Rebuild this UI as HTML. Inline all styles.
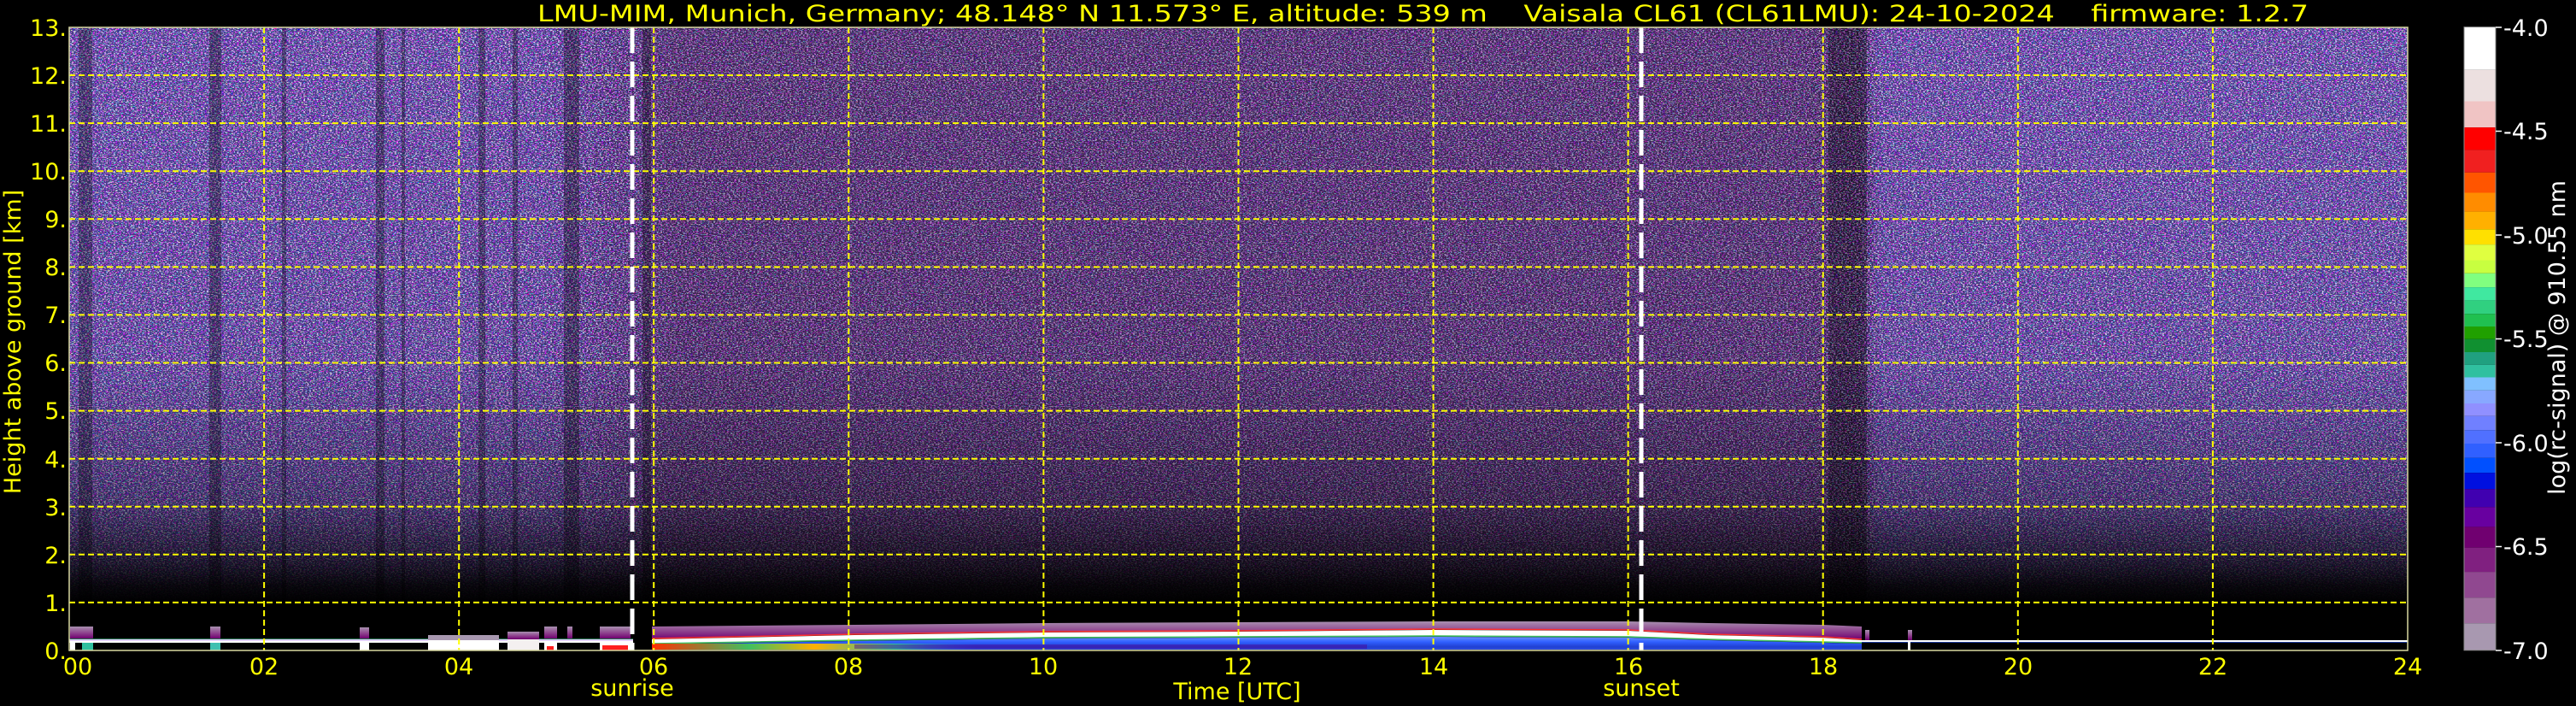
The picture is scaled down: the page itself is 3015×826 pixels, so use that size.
<!DOCTYPE html>
<html><head><meta charset="utf-8"><style>
html,body{margin:0;padding:0;background:#000;}
svg{display:block}
text{font-family:"DejaVu Sans","Liberation Sans",sans-serif;}
</style></head><body>
<svg width="3015" height="826" viewBox="0 0 3015 826" xmlns="http://www.w3.org/2000/svg">
<defs>
<linearGradient id="hcol" x1="0" x2="1" y1="0" y2="0">
<stop offset="0" stop-color="rgb(72,64,135)"/>
<stop offset="0.2" stop-color="rgb(70,60,130)"/>
<stop offset="0.235" stop-color="rgb(62,44,100)"/>
<stop offset="0.26" stop-color="rgb(62,38,86)"/>
<stop offset="0.74" stop-color="rgb(62,38,86)"/>
<stop offset="0.765" stop-color="rgb(45,28,65)"/>
<stop offset="0.775" stop-color="rgb(70,60,130)"/>
<stop offset="1" stop-color="rgb(72,64,135)"/>
</linearGradient>
<linearGradient id="hn" x1="0" x2="1" y1="0" y2="0">
<stop offset="0" stop-color="#fff"/>
<stop offset="0.22" stop-color="#fff"/>
<stop offset="0.26" stop-color="#b8b8b8"/>
<stop offset="0.74" stop-color="#b8b8b8"/>
<stop offset="0.775" stop-color="#fff"/>
<stop offset="1" stop-color="#fff"/>
</linearGradient>
<linearGradient id="vdark" x1="0" x2="0" y1="32" y2="705" gradientUnits="userSpaceOnUse">
<stop offset="0" stop-color="#000" stop-opacity="0"/>
<stop offset="0.58" stop-color="#000" stop-opacity="0.05"/>
<stop offset="0.83" stop-color="#000" stop-opacity="0.35"/>
<stop offset="0.915" stop-color="#000" stop-opacity="0.65"/>
<stop offset="0.97" stop-color="#000" stop-opacity="0.92"/>
<stop offset="1" stop-color="#000" stop-opacity="1"/>
</linearGradient>
<mask id="m0"><rect x="81" y="32" width="2737" height="729" fill="url(#hn)"/></mask>
<filter id="nz" x="0" y="0" width="1" height="1">
<feTurbulence type="fractalNoise" baseFrequency="0.45 0.9" numOctaves="2" seed="7"/>
<feColorMatrix type="matrix" values="3 0 0 0 -0.9  0 3 0 0 -1.15  0 0 3 0 -0.45  0 0 0 5 -2.1"/>
<feComponentTransfer><feFuncA type="discrete" tableValues="0 1"/></feComponentTransfer>
</filter>
<linearGradient id="purp" x1="0" x2="0" y1="0" y2="1">
<stop offset="0" stop-color="#a890b0"/>
<stop offset="0.5" stop-color="#904890"/>
<stop offset="1" stop-color="#700070"/>
</linearGradient>
<linearGradient id="blue" x1="0" x2="0" y1="0" y2="1">
<stop offset="0" stop-color="#6a90ff"/>
<stop offset="0.4" stop-color="#3060ff"/>
<stop offset="0.8" stop-color="#2040d0"/>
<stop offset="1" stop-color="#3050e0"/>
</linearGradient>
<linearGradient id="morn" x1="0" x2="1" y1="0" y2="0">
<stop offset="0" stop-color="#ff3000"/>
<stop offset="0.3" stop-color="#40c060"/>
<stop offset="0.5" stop-color="#ffb000"/>
<stop offset="0.75" stop-color="#30c0a0"/>
<stop offset="1" stop-color="#3060ff" stop-opacity="0"/>
</linearGradient>
</defs>

<rect x="81" y="32" width="2737" height="729" fill="url(#hcol)"/>
<g mask="url(#m0)" opacity="0.9"><rect x="81" y="32" width="2737" height="729" fill="#000" filter="url(#nz)"/></g>
<rect x="81" y="32" width="2737" height="729" fill="url(#vdark)"/>
<g fill="#000" opacity="0.3">
<rect x="92" y="32" width="16" height="700"/>
<rect x="245" y="32" width="14" height="700"/>
<rect x="330" y="32" width="5" height="700"/>
<rect x="440" y="32" width="10" height="700"/>
<rect x="470" y="32" width="4" height="700"/>
<rect x="560" y="32" width="8" height="700"/>
<rect x="600" y="32" width="6" height="700"/>
<rect x="660" y="32" width="18" height="700"/>
<rect x="752" y="32" width="10" height="700"/>
<rect x="2140" y="32" width="45" height="700"/>
</g>

<g>
<rect x="81" y="748" width="660" height="2" fill="#e0d0ff"/>
<rect x="81" y="750" width="660" height="2" fill="#fff"/>
<rect x="81" y="747" width="660" height="1" fill="#40c080" opacity="0.6"/>
<rect x="82" y="733" width="27" height="14" fill="url(#purp)"/>
<rect x="82" y="752" width="6" height="9" fill="#fff"/>
<rect x="96" y="752" width="13" height="9" fill="#30c0a0"/>
<rect x="246" y="733" width="12" height="14" fill="url(#purp)"/>
<rect x="246" y="752" width="12" height="9" fill="#40c0b0"/>
<rect x="421" y="734" width="11" height="13" fill="url(#purp)"/>
<rect x="421" y="752" width="11" height="9" fill="#fff"/>
<rect x="501" y="743" width="83" height="6" fill="#a898b0"/>
<rect x="501" y="749" width="83" height="12" fill="#fff"/>
<rect x="594" y="739" width="37" height="9" fill="url(#purp)"/>
<rect x="594" y="748" width="37" height="13" fill="#f4f0f0"/>
<rect x="637" y="733" width="15" height="14" fill="url(#purp)"/>
<rect x="637" y="752" width="15" height="9" fill="#fff"/>
<rect x="640" y="756" width="8" height="5" fill="#ff2020"/>
<rect x="664" y="733" width="6" height="14" fill="url(#purp)"/>
<rect x="702" y="733" width="36" height="14" fill="url(#purp)"/>
<rect x="702" y="750" width="36" height="11" fill="#fff"/>
<rect x="705" y="755" width="30" height="6" fill="#ff2020"/>
</g>

<polygon fill="url(#purp)" points="763,733 1000,731 1221,729 1449,728 1677,727 1906,727 2000,729 2133,731 2179,733 2179,748 2133,745 2000,742 1906,737 1677,736 1449,738 1221,739 1000,742 763,747"/>
<polyline fill="none" stroke="#ff3030" stroke-width="1.5" points="763,747 1000,742 1221,739 1449,738 1677,736 1906,737 2000,742 2133,745 2179,748"/>
<polygon fill="#fff" points="763,748 1000,743 1221,740 1449,739 1677,737 1906,738 2000,743 2133,746 2179,749 2179,752 2133,751 2000,748 1906,745 1677,744 1449,745 1221,746 1000,749 763,753"/>
<polyline fill="none" stroke="#40c060" stroke-width="1.5" points="763,753 1000,749 1221,746 1449,745 1677,744 1906,745 2000,748 2133,751 2179,752"/>
<polygon fill="url(#blue)" points="763,754 1000,750 1221,747 1449,746 1677,745 1906,746 2000,749 2133,752 2179,753 2179,760 763,760"/>
<rect x="763" y="753" width="380" height="7" fill="url(#morn)"/>
<rect x="1000" y="754" width="600" height="5" fill="#500090" opacity="0.45"/>

<rect x="2179" y="749" width="639" height="2" fill="#fff"/>
<rect x="2179" y="751" width="639" height="1" fill="#3060ff" opacity="0.6"/>
<rect x="2183" y="737" width="5" height="12" fill="url(#purp)"/>
<rect x="2233" y="737" width="5" height="12" fill="url(#purp)"/>
<rect x="2233" y="751" width="3" height="10" fill="#fff"/>

<g stroke="#ffff00" stroke-width="2" stroke-dasharray="7,4" fill="none">
<line x1="81" x2="2818" y1="704.9" y2="704.9"/>
<line x1="81" x2="2818" y1="648.8" y2="648.8"/>
<line x1="81" x2="2818" y1="592.8" y2="592.8"/>
<line x1="81" x2="2818" y1="536.7" y2="536.7"/>
<line x1="81" x2="2818" y1="480.6" y2="480.6"/>
<line x1="81" x2="2818" y1="424.5" y2="424.5"/>
<line x1="81" x2="2818" y1="368.4" y2="368.4"/>
<line x1="81" x2="2818" y1="312.4" y2="312.4"/>
<line x1="81" x2="2818" y1="256.3" y2="256.3"/>
<line x1="81" x2="2818" y1="200.2" y2="200.2"/>
<line x1="81" x2="2818" y1="144.1" y2="144.1"/>
<line x1="81" x2="2818" y1="88" y2="88"/>
<line y1="32" y2="761" x1="309.1" x2="309.1"/>
<line y1="32" y2="761" x1="537.2" x2="537.2"/>
<line y1="32" y2="761" x1="765.2" x2="765.2"/>
<line y1="32" y2="761" x1="993.3" x2="993.3"/>
<line y1="32" y2="761" x1="1221.4" x2="1221.4"/>
<line y1="32" y2="761" x1="1449.5" x2="1449.5"/>
<line y1="32" y2="761" x1="1677.6" x2="1677.6"/>
<line y1="32" y2="761" x1="1905.6" x2="1905.6"/>
<line y1="32" y2="761" x1="2133.7" x2="2133.7"/>
<line y1="32" y2="761" x1="2361.8" x2="2361.8"/>
<line y1="32" y2="761" x1="2589.9" x2="2589.9"/>
</g>
<g stroke="#fff" stroke-width="5" stroke-dasharray="30,10">
<line x1="740" x2="740" y1="32" y2="761"/>
<line x1="1921" x2="1921" y1="32" y2="761"/>
</g>
<rect x="81" y="32" width="2737" height="729" fill="none" stroke="#d8d8a0" stroke-width="1.5"/>

<text x="629" y="25" font-size="27" fill="#ffff00" textLength="2073" lengthAdjust="spacingAndGlyphs" xml:space="preserve">LMU-MIM, Munich, Germany; 48.148° N 11.573° E, altitude: 539 m    Vaisala CL61 (CL61LMU): 24-10-2024    firmware: 1.2.7</text>

<g font-size="27" fill="#ffff00" text-anchor="end">
<text x="78" y="42">13.</text>
<text x="78" y="98">12.</text>
<text x="78" y="154">11.</text>
<text x="78" y="210">10.</text>
<text x="78" y="266">9.</text>
<text x="78" y="322">8.</text>
<text x="78" y="378">7.</text>
<text x="78" y="434">6.</text>
<text x="78" y="490">5.</text>
<text x="78" y="547">4.</text>
<text x="78" y="603">3.</text>
<text x="78" y="659">2.</text>
<text x="78" y="715">1.</text>
<text x="78" y="771">0.</text>
</g>
<text transform="translate(24,400) rotate(-90)" font-size="27" fill="#ffff00" text-anchor="middle">Height above ground [km]</text>

<g font-size="27" fill="#ffff00" text-anchor="middle">
<text x="91" y="789">00</text>
<text x="309" y="789">02</text>
<text x="537" y="789">04</text>
<text x="765" y="789">06</text>
<text x="993" y="789">08</text>
<text x="1221" y="789">10</text>
<text x="1449" y="789">12</text>
<text x="1678" y="789">14</text>
<text x="1906" y="789">16</text>
<text x="2134" y="789">18</text>
<text x="2362" y="789">20</text>
<text x="2590" y="789">22</text>
<text x="2818" y="789">24</text>
<text x="740" y="814">sunrise</text>
<text x="1921" y="814">sunset</text>
<text x="1448" y="818">Time [UTC]</text>
</g>

<g>
<rect x="2884" y="31.6" width="37" height="50.1" fill="#ffffff"/>
<rect x="2884" y="81.7" width="37" height="36.8" fill="#ece0e0"/>
<rect x="2884" y="118.5" width="37" height="30.6" fill="#f0c4c4"/>
<rect x="2884" y="149.1" width="37" height="26.3" fill="#ff0000"/>
<rect x="2884" y="175.4" width="37" height="26.4" fill="#f02020"/>
<rect x="2884" y="201.8" width="37" height="23.7" fill="#ff5500"/>
<rect x="2884" y="225.5" width="37" height="22.1" fill="#ff8c00"/>
<rect x="2884" y="247.6" width="37" height="20.6" fill="#ffb000"/>
<rect x="2884" y="268.2" width="37" height="17.9" fill="#ffe000"/>
<rect x="2884" y="286.1" width="37" height="18.4" fill="#e0ff40"/>
<rect x="2884" y="304.5" width="37" height="15.3" fill="#c8ff40"/>
<rect x="2884" y="319.8" width="37" height="16.3" fill="#80ff80"/>
<rect x="2884" y="336.1" width="37" height="15.3" fill="#40e8a0"/>
<rect x="2884" y="351.4" width="37" height="15.8" fill="#30d080"/>
<rect x="2884" y="367.2" width="37" height="14.8" fill="#20c050"/>
<rect x="2884" y="382" width="37" height="14.7" fill="#20a000"/>
<rect x="2884" y="396.7" width="37" height="15.3" fill="#109030"/>
<rect x="2884" y="412" width="37" height="14.8" fill="#20a080"/>
<rect x="2884" y="426.8" width="37" height="14.7" fill="#30c0a0"/>
<rect x="2884" y="441.5" width="37" height="15.3" fill="#80c0ff"/>
<rect x="2884" y="456.8" width="37" height="15.2" fill="#88a8ff"/>
<rect x="2884" y="472" width="37" height="14.8" fill="#9090ff"/>
<rect x="2884" y="486.8" width="37" height="16.4" fill="#7080ff"/>
<rect x="2884" y="503.2" width="37" height="15.8" fill="#5070ff"/>
<rect x="2884" y="519" width="37" height="16.8" fill="#3060ff"/>
<rect x="2884" y="535.8" width="37" height="17.4" fill="#0050ff"/>
<rect x="2884" y="553.2" width="37" height="19" fill="#0010e0"/>
<rect x="2884" y="572.2" width="37" height="21.1" fill="#4000b0"/>
<rect x="2884" y="593.3" width="37" height="23.1" fill="#6800a0"/>
<rect x="2884" y="616.4" width="37" height="24.3" fill="#700070"/>
<rect x="2884" y="640.7" width="37" height="28.4" fill="#802080"/>
<rect x="2884" y="669.1" width="37" height="30.1" fill="#904890"/>
<rect x="2884" y="699.2" width="37" height="30" fill="#a070a0"/>
<rect x="2884" y="729.2" width="37" height="31.6" fill="#a898b0"/>
<rect x="2884" y="31.6" width="37" height="729.2" fill="none" stroke="#888" stroke-width="1"/>
</g>
<g stroke="#fff" stroke-width="1.5">
<line x1="2921" x2="2928" y1="32" y2="32"/>
<line x1="2921" x2="2928" y1="153.5" y2="153.5"/>
<line x1="2921" x2="2928" y1="275" y2="275"/>
<line x1="2921" x2="2928" y1="396.5" y2="396.5"/>
<line x1="2921" x2="2928" y1="518" y2="518"/>
<line x1="2921" x2="2928" y1="639.5" y2="639.5"/>
<line x1="2921" x2="2928" y1="761" y2="761"/>
</g>
<g font-size="27" fill="#fff">
<text x="2930" y="42">-4.0</text>
<text x="2930" y="163">-4.5</text>
<text x="2930" y="285">-5.0</text>
<text x="2930" y="406">-5.5</text>
<text x="2930" y="528">-6.0</text>
<text x="2930" y="649">-6.5</text>
<text x="2930" y="771">-7.0</text>
</g>
<text transform="translate(3002,395) rotate(-90)" font-size="27" fill="#fff" text-anchor="middle">log(rc-signal) @ 910.55 nm</text>
</svg>
</body></html>
